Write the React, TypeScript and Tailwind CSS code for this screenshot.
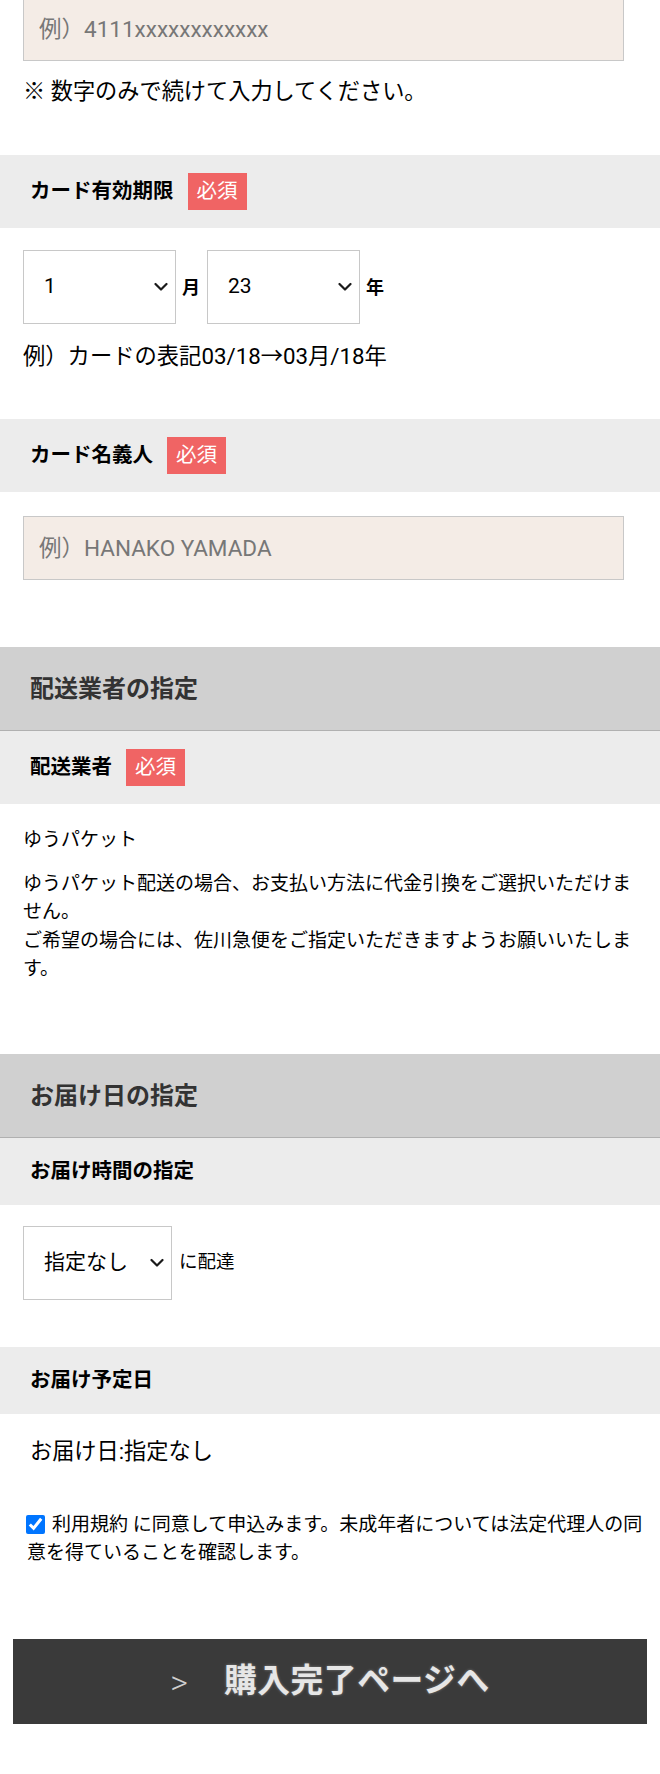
import React from "react";

const FONT = "font-['Roboto','Noto_Sans_CJK_JP',sans-serif]";

function Badge() {
  return (
    <span className="ml-[14px] inline-flex h-[37px] w-[59px] items-center justify-center bg-[#f06464] text-[20.5px] font-normal leading-none text-white">
      必須
    </span>
  );
}

function Band({ label, badge }: { label: string; badge?: boolean }) {
  return (
    <div className="flex items-center bg-[#ececec] py-[18px] pl-[30px]">
      <span className="text-[20.5px] font-bold leading-[31px] text-black">{label}</span>
      {badge && <Badge />}
    </div>
  );
}

function SectionHeader({ title }: { title: string }) {
  return (
    <div className="flex h-[84px] items-center border-b border-[#b0b0b0] bg-[#d0d0d0] pl-[30px]">
      <span className="text-[24px] font-bold leading-[32px] text-[#333333]">{title}</span>
    </div>
  );
}

function Chevron() {
  return (
    <svg
      className="pointer-events-none absolute right-[8px] top-1/2 -translate-y-1/2"
      width="14"
      height="9"
      viewBox="0 0 14 9"
      fill="none"
    >
      <path d="M1.5 1.5 L7 7 L12.5 1.5" stroke="#1a1a1a" strokeWidth="2.2" strokeLinecap="round" strokeLinejoin="round" />
    </svg>
  );
}

function Select({ value, options, w }: { value: string; options: string[]; w: string }) {
  return (
    <div className={`relative h-[74px] ${w}`}>
      <select
        defaultValue={value}
        className="h-full w-full appearance-none rounded-none border border-[#c8c8c8] bg-white pl-[20px] text-[21px] text-black outline-none"
      >
        {options.map((o) => (
          <option key={o} value={o}>
            {o}
          </option>
        ))}
      </select>
      <Chevron />
    </div>
  );
}

export default function App() {
  return (
    <div className={`w-[660px] overflow-hidden bg-white text-black ${FONT}`}>
      <div className="pl-[23px]">
        <input
          type="text"
          placeholder="例）4111xxxxxxxxxxxx"
          className="mt-[-3px] block h-[64px] w-[601px] border border-[#c8c8c8] bg-[#f4ece6] px-[15px] text-[22.5px] text-black outline-none placeholder:text-[#777777]"
        />
        <p className="mt-[14px] text-[22.2px] leading-[32px]">※ 数字のみで続けて入力してください。</p>
      </div>

      <div className="mt-[48px]">
        <Band label="カード有効期限" badge />
      </div>

      <div className="mt-[22px] flex items-center pl-[23px]">
        <Select value="1" options={["1","2","3","4","5","6","7","8","9","10","11","12"]} w="w-[153px]" />
        <span className="ml-[6px] mr-[7px] text-[18px] font-bold">月</span>
        <Select value="23" options={["23","24","25","26","27","28","29","30"]} w="w-[153px]" />
        <span className="ml-[6px] text-[18px] font-bold">年</span>
      </div>

      <p className="mt-[16px] pl-[23px] text-[22.3px] leading-[32px]">例）カードの表記03/18→03月/18年</p>

      <div className="mt-[47px]">
        <Band label="カード名義人" badge />
      </div>

      <div className="mt-[24px] pl-[23px]">
        <input
          type="text"
          placeholder="例）HANAKO YAMADA"
          className="block h-[64px] w-[601px] border border-[#c8c8c8] bg-[#f4ece6] px-[15px] text-[22.5px] text-black outline-none placeholder:text-[#777777]"
        />
      </div>

      <div className="mt-[67px]">
        <SectionHeader title="配送業者の指定" />
        <Band label="配送業者" badge />
      </div>

      <div className="px-[23px]">
        <p className="mt-[22px] text-[19px] leading-[28px]">ゆうパケット</p>
        <p className="mt-[16px] text-[19px] leading-[28.3px]">
          ゆうパケット配送の場合、お支払い方法に代金引換をご選択いただけません。
          <br />
          ご希望の場合には、佐川急便をご指定いただきますようお願いいたします。
        </p>
      </div>

      <div className="mt-[71px]">
        <SectionHeader title="お届け日の指定" />
        <Band label="お届け時間の指定" />
      </div>

      <div className="mt-[21px] flex items-center pl-[23px]">
        <Select value="指定なし" options={["指定なし", "午前中", "14時～16時", "16時～18時", "18時～20時", "19時～21時"]} w="w-[149px]" />
        <span className="ml-[7px] text-[18.5px]">に配達</span>
      </div>

      <div className="mt-[47px]">
        <Band label="お届け予定日" />
      </div>

      <p className="mt-[21px] pl-[30px] text-[22.2px] leading-[32px]">お届け日:指定なし</p>

      <div className="mt-[44px] pl-[27px] pr-[10px] text-[19px] leading-[28px]">
        <label>
          <input
            type="checkbox"
            defaultChecked
            className="mr-[7px] ml-[-1px] inline-block h-[19px] w-[19px] align-[-3px] accent-[#0075ff]"
          />
          利用規約 に同意して申込みます。未成年者については法定代理人の同意を得ていることを確認します。
        </label>
      </div>

      <div className="mx-[13px] mt-[72px] mb-[48px]">
        <button className="flex h-[85px] w-full items-center justify-center bg-[#3a3a3a]">
          <span className="mr-[36px] text-[34px] font-light leading-none text-[#cfcfcf]">&gt;</span>
          <span className="text-[32.8px] font-bold leading-none tracking-[0.5px] text-[#e6e6e6] [text-shadow:0_0_3px_rgba(255,255,255,0.35)]">
            購入完了ページへ
          </span>
        </button>
      </div>
    </div>
  );
}
